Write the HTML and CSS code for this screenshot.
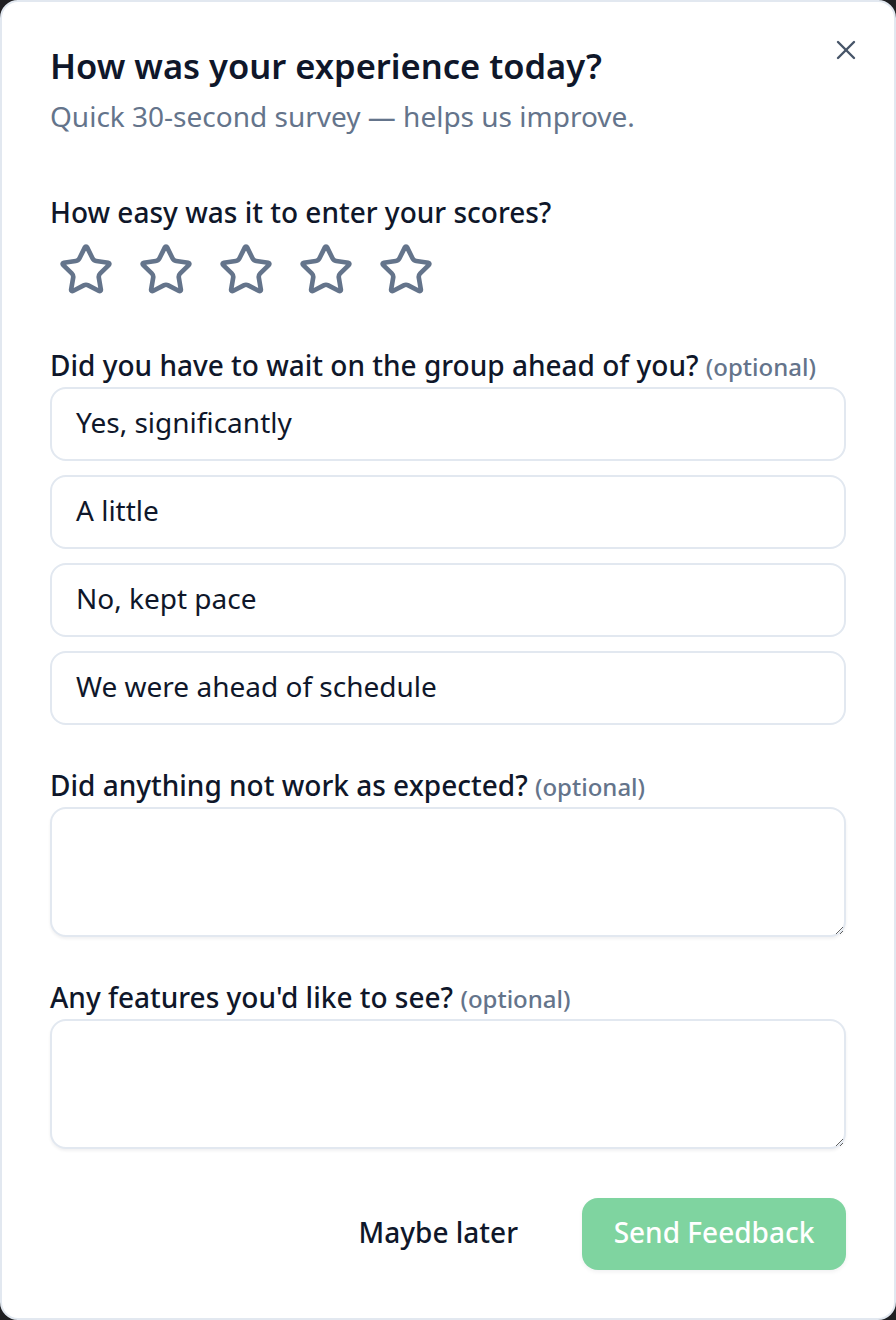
FILE: index.html
```html
<!DOCTYPE html>
<html lang="en">
<head>
<meta charset="utf-8">
<title>Feedback</title>
<link rel="stylesheet" href="styles.css">
</head>
<body>
<div class="modal" role="dialog" aria-labelledby="fb-title">
  <button class="close" aria-label="Close">
    <svg viewBox="0 0 24 24" width="32" height="32" fill="none" stroke="currentColor" stroke-width="1.8" stroke-linecap="round" stroke-linejoin="round"><path d="M18 6 6 18"/><path d="m6 6 12 12"/></svg>
  </button>
  <header class="head">
    <h1 id="fb-title" class="title">How was your experience today?</h1>
    <p class="subtitle">Quick 30-second survey — helps us improve.</p>
  </header>

  <section class="q">
    <div class="label">How easy was it to enter your scores?</div>
    <div class="stars">
      <button class="star" aria-label="1 star"><svg viewBox="0 0 24 24" width="56" height="56" fill="none" stroke="currentColor" stroke-width="2" stroke-linecap="round" stroke-linejoin="round"><path d="M11.525 2.295a.53.53 0 0 1 .95 0l2.31 4.679a2.123 2.123 0 0 0 1.595 1.16l5.166.756a.53.53 0 0 1 .294.904l-3.736 3.638a2.123 2.123 0 0 0-.611 1.878l.882 5.14a.53.53 0 0 1-.771.56l-4.618-2.428a2.122 2.122 0 0 0-1.973 0L6.396 21.01a.53.53 0 0 1-.77-.56l.881-5.139a2.122 2.122 0 0 0-.611-1.879L2.16 9.795a.53.53 0 0 1 .294-.906l5.165-.755a2.122 2.122 0 0 0 1.597-1.16z"/></svg></button>
      <button class="star" aria-label="2 stars"><svg viewBox="0 0 24 24" width="56" height="56" fill="none" stroke="currentColor" stroke-width="2" stroke-linecap="round" stroke-linejoin="round"><path d="M11.525 2.295a.53.53 0 0 1 .95 0l2.31 4.679a2.123 2.123 0 0 0 1.595 1.16l5.166.756a.53.53 0 0 1 .294.904l-3.736 3.638a2.123 2.123 0 0 0-.611 1.878l.882 5.14a.53.53 0 0 1-.771.56l-4.618-2.428a2.122 2.122 0 0 0-1.973 0L6.396 21.01a.53.53 0 0 1-.77-.56l.881-5.139a2.122 2.122 0 0 0-.611-1.879L2.16 9.795a.53.53 0 0 1 .294-.906l5.165-.755a2.122 2.122 0 0 0 1.597-1.16z"/></svg></button>
      <button class="star" aria-label="3 stars"><svg viewBox="0 0 24 24" width="56" height="56" fill="none" stroke="currentColor" stroke-width="2" stroke-linecap="round" stroke-linejoin="round"><path d="M11.525 2.295a.53.53 0 0 1 .95 0l2.31 4.679a2.123 2.123 0 0 0 1.595 1.16l5.166.756a.53.53 0 0 1 .294.904l-3.736 3.638a2.123 2.123 0 0 0-.611 1.878l.882 5.14a.53.53 0 0 1-.771.56l-4.618-2.428a2.122 2.122 0 0 0-1.973 0L6.396 21.01a.53.53 0 0 1-.77-.56l.881-5.139a2.122 2.122 0 0 0-.611-1.879L2.16 9.795a.53.53 0 0 1 .294-.906l5.165-.755a2.122 2.122 0 0 0 1.597-1.16z"/></svg></button>
      <button class="star" aria-label="4 stars"><svg viewBox="0 0 24 24" width="56" height="56" fill="none" stroke="currentColor" stroke-width="2" stroke-linecap="round" stroke-linejoin="round"><path d="M11.525 2.295a.53.53 0 0 1 .95 0l2.31 4.679a2.123 2.123 0 0 0 1.595 1.16l5.166.756a.53.53 0 0 1 .294.904l-3.736 3.638a2.123 2.123 0 0 0-.611 1.878l.882 5.14a.53.53 0 0 1-.771.56l-4.618-2.428a2.122 2.122 0 0 0-1.973 0L6.396 21.01a.53.53 0 0 1-.77-.56l.881-5.139a2.122 2.122 0 0 0-.611-1.879L2.16 9.795a.53.53 0 0 1 .294-.906l5.165-.755a2.122 2.122 0 0 0 1.597-1.16z"/></svg></button>
      <button class="star" aria-label="5 stars"><svg viewBox="0 0 24 24" width="56" height="56" fill="none" stroke="currentColor" stroke-width="2" stroke-linecap="round" stroke-linejoin="round"><path d="M11.525 2.295a.53.53 0 0 1 .95 0l2.31 4.679a2.123 2.123 0 0 0 1.595 1.16l5.166.756a.53.53 0 0 1 .294.904l-3.736 3.638a2.123 2.123 0 0 0-.611 1.878l.882 5.14a.53.53 0 0 1-.771.56l-4.618-2.428a2.122 2.122 0 0 0-1.973 0L6.396 21.01a.53.53 0 0 1-.77-.56l.881-5.139a2.122 2.122 0 0 0-.611-1.879L2.16 9.795a.53.53 0 0 1 .294-.906l5.165-.755a2.122 2.122 0 0 0 1.597-1.16z"/></svg></button>
    </div>
  </section>

  <section class="q">
    <div class="label">Did you have to wait on the group ahead of you? <span class="opt">(optional)</span></div>
    <div class="options">
      <button class="option">Yes, significantly</button>
      <button class="option">A little</button>
      <button class="option">No, kept pace</button>
      <button class="option">We were ahead of schedule</button>
    </div>
  </section>

  <section class="q">
    <div class="label">Did anything not work as expected? <span class="opt">(optional)</span></div>
    <textarea class="field"></textarea>
  </section>

  <section class="q">
    <div class="label">Any features you'd like to see? <span class="opt">(optional)</span></div>
    <textarea class="field"></textarea>
  </section>

  <footer class="actions">
    <button class="btn-ghost">Maybe later</button>
    <button class="btn-primary" disabled>Send Feedback</button>
  </footer>
</div>
</body>
</html>
```

FILE: styles.css
```css
* { box-sizing: border-box; }

html, body {
  margin: 0;
  padding: 0;
}

body {
  background: #1f1f22;
  font-family: "Noto Sans", "Open Sans", sans-serif;
  color: #0f172a;
}

.modal {
  position: relative;
  width: 896px;
  height: 1320px;
  background: #ffffff;
  border: 2px solid #e2e8f0;
  border-radius: 18px;
  padding: 39px 48px 48px;
  display: flex;
  flex-direction: column;
}

.close {
  position: absolute;
  top: 32px;
  right: 32px;
  width: 32px;
  height: 32px;
  padding: 0;
  border: 0;
  background: none;
  color: #475569;
  display: flex;
  align-items: center;
  justify-content: center;
}

.head {
  margin-bottom: 11px;
}

.title {
  margin: 0;
  font-size: 34.5px;
  line-height: 50px;
  font-weight: 600;
  color: #0f172a;
}

.subtitle {
  margin: 0;
  font-size: 28px;
  line-height: 50px;
  color: #64748b;
}

.q {
  margin-top: 40px;
  display: flex;
  flex-direction: column;
}

.label {
  font-size: 28px;
  line-height: 40px;
  font-weight: 500;
  color: #0f172a;
  padding-bottom: 1px;
  margin-bottom: 1px;
}

.opt {
  font-size: 24px;
  line-height: 1;
  font-weight: 500;
  color: #64748b;
}

.stars {
  display: flex;
  gap: 16px;
  margin: 4px 0 3px 4px;
}

.star {
  width: 64px;
  height: 64px;
  padding: 4px;
  border: 0;
  background: none;
  color: #64748b;
  display: flex;
  align-items: center;
  justify-content: center;
}

.options {
  display: flex;
  flex-direction: column;
  gap: 14px;
}

.option {
  height: 74px;
  border: 2px solid #e2e8f0;
  border-radius: 16px;
  background: #ffffff;
  text-align: left;
  padding: 0 24px 4px;
  font-family: inherit;
  font-size: 28px;
  color: #0f172a;
}

.field {
  height: 130px;
  border: 2px solid #e2e8f0;
  border-radius: 16px;
  background: #ffffff;
  box-shadow: 0 2px 3px rgba(15, 23, 42, 0.06);
  font-family: inherit;
  font-size: 28px;
  padding: 16px 22px;
  resize: vertical;
}

.actions {
  margin-top: auto;
  display: flex;
  justify-content: flex-end;
  align-items: center;
  gap: 40px;
}

.btn-ghost {
  height: 72px;
  padding: 0 24px 4px;
  border: 0;
  background: none;
  font-family: inherit;
  font-size: 28px;
  font-weight: 500;
  color: #0f172a;
}

.btn-primary {
  height: 72px;
  width: 264px;
  padding: 0 0 4px;
  border: 0;
  border-radius: 16px;
  background: #7fd4a0;
  color: #ffffff;
  font-family: inherit;
  font-size: 28px;
  font-weight: 500;
  box-shadow: 0 2px 4px rgba(15, 23, 42, 0.06);
}
```
